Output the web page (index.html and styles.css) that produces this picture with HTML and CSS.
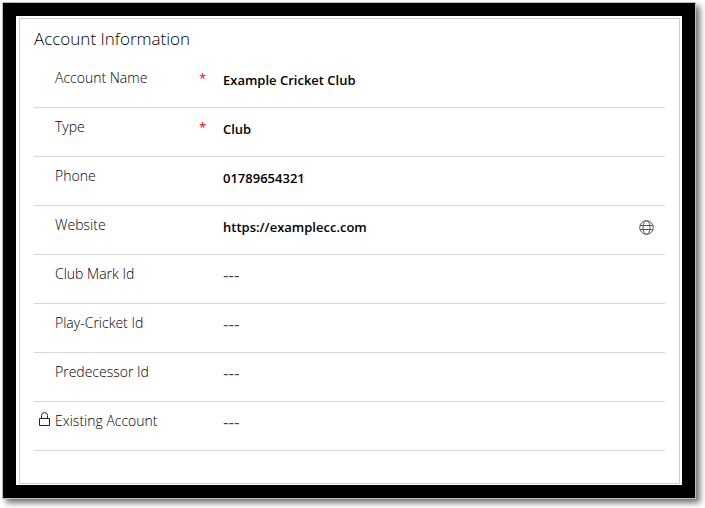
FILE: index.html
```html
<!DOCTYPE html>
<html lang="en">
<head>
  <meta charset="UTF-8">
  <meta name="viewport" content="width=device-width, initial-scale=1">
  <title>Account Information</title>
  <link rel="stylesheet" href="styles.css">
</head>
<body>
  <div class="frame">
    <form class="card">
      <h2>Account Information</h2>
      <div class="row">
        <label for="accountName">Account Name</label>
        <span class="required">*</span>
        <input type="text" id="accountName" value="Example Cricket Club" required>
      </div>
      <div class="row">
        <label for="type">Type</label>
        <span class="required">*</span>
        <input type="text" id="type" value="Club" required>
      </div>
      <div class="row">
        <label for="phone">Phone</label>
        <input type="tel" id="phone" value="01789654321">
      </div>
      <div class="row">
        <label for="website">Website</label>
        <input type="url" id="website" value="https://examplecc.com">
        <a class="open-link" href="https://examplecc.com" aria-label="Open website">
          <svg width="15" height="15" viewBox="0 0 15 15" fill="none" stroke="currentColor">
            <circle cx="7.5" cy="7.5" r="6.8"/>
            <ellipse cx="7.5" cy="7.5" rx="3.5" ry="6.8"/>
            <path d="M1.3 5.5h12.4M1.3 9.5h12.4"/>
          </svg>
        </a>
      </div>
      <div class="row">
        <label for="clubMark">Club Mark Id</label>
        <input type="text" id="clubMark" class="empty" value="---">
      </div>
      <div class="row">
        <label for="playCricket">Play-Cricket Id</label>
        <input type="text" id="playCricket" class="empty" value="---">
      </div>
      <div class="row">
        <label for="predecessor">Predecessor Id</label>
        <input type="text" id="predecessor" class="empty" value="---">
      </div>
      <div class="row">
        <svg class="lock" width="13" height="15" viewBox="0 0 13 15" fill="none" stroke="currentColor">
          <path d="M1.5 6.5h10v7h-10zM3.5 6.5V3.5a3 3 0 0 1 6 0v3"/>
        </svg>
        <label for="existing">Existing Account</label>
        <input type="text" id="existing" class="empty" value="---" readonly>
      </div>
    </form>
  </div>
</body>
</html>
```
FILE: styles.css
```css
* {
  box-sizing: border-box;
}
body {
  margin: 0;
  padding: 3px 10px 10px 3px;
  background: #fff;
  font-family: "Open Sans", "Noto Sans", sans-serif;
  font-size: 14px;
  color: #222;
}
.frame {
  border: 13px solid #000;
  padding: 2px 2px 1px 3px;
  box-shadow: 0 0 0 1px #bbb, 4px 4px 6px 1px rgba(0,0,0,0.55);
}
.card {
  border: 1px solid #ccc;
  padding: 0 14px 32px;
}
h2 {
  margin: 0;
  color: #000;
  font-size: 17px;
  font-weight: 300;
  line-height: 40px;
}
.row {
  display: grid;
  grid-template-columns: 21px 144px 24px 1fr auto;
  align-items: start;
  height: 49px;
  padding-top: 9px;
  border-bottom: 1px solid #d6d6d6;
}
.lock {
  grid-column: 1;
  margin: 1px 0 0 4px;
}
label {
  grid-column: 2;
  color: #000;
  font-weight: 300;
  line-height: 20px;
}
.required {
  grid-column: 3;
  color: #f00;
  font-size: 13px;
  line-height: 20px;
}
input {
  grid-column: 4;
  width: 100%;
  height: 24px;
  padding: 0;
  border: 0;
  background: none;
  color: #000;
  font: inherit;
  font-size: 13px;
  font-weight: 600;
  outline: none;
}
.empty {
  padding-bottom: 4px;
  color: #444;
  font-size: 17px;
  font-weight: 400;
}
.open-link {
  grid-column: 5;
  padding: 5px 11px 0 0;
  color: #555;
  line-height: 0;
}
```
